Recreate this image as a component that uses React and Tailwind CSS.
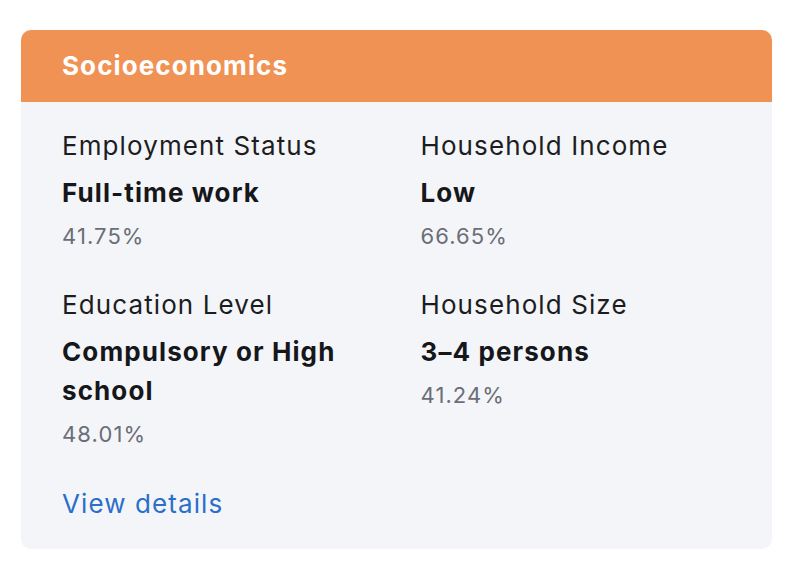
import React from "react";

const stats = [
  { label: "Employment Status", value: "Full-time work", pct: "41.75%" },
  { label: "Household Income", value: "Low", pct: "66.65%" },
  { label: "Education Level", value: "Compulsory or High school", pct: "48.01%" },
  { label: "Household Size", value: "3–4 persons", pct: "41.24%" },
];

const App = () => {
  return (
    <div className="min-h-screen bg-white pt-[30px] px-[21px] font-['Inter',sans-serif] tracking-[1.1px]">
      <div className="w-[751px] rounded-[10px] overflow-hidden bg-[#f4f5f9]">
        <div className="h-[72px] bg-[#f09254] px-[41px] flex items-center pb-[1px]">
          <h2 className="text-[26px] font-bold text-white">Socioeconomics</h2>
        </div>
        <div className="px-[41px] pt-[24px] pb-[26px]">
          <div className="grid grid-cols-2 gap-x-[48px] gap-y-[32px]">
            {stats.map((s) => (
              <div key={s.label} className="flex flex-col gap-2">
                <div className="text-[26px] leading-[39px] text-[#1c1d21]">{s.label}</div>
                <div className="text-[26px] leading-[39px] font-bold text-[#16171b] pr-4">{s.value}</div>
                <div className="text-[22px] leading-[33px] text-[#6b6e76]">{s.pct}</div>
              </div>
            ))}
          </div>
          <a href="#" className="block mt-[33px] text-[26px] leading-[39px] text-[#2a6fc9]">
            View details
          </a>
        </div>
      </div>
    </div>
  );
};

export default App;
